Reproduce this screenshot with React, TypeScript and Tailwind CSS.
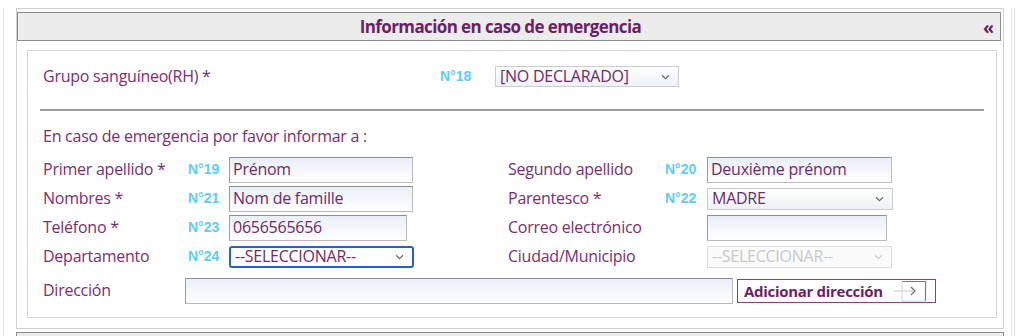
import React from "react";

const labelCls =
  "pb-[2px] text-[16px] tracking-[-0.25px] leading-[20px] text-[#7a2e70]";
const numCls =
  "font-['Liberation_Sans',Arial,sans-serif] font-bold text-[14px] text-[#5ccdf3]";

const Chevron: React.FC<{ color?: string }> = ({ color = "#6b6b6b" }) => (
  <svg width="9" height="6" viewBox="0 0 9 6" className="shrink-0">
    <path d="M1 1.2 L4.5 4.6 L8 1.2" fill="none" stroke={color} strokeWidth="1.2" />
  </svg>
);

const TextInput: React.FC<{ value?: string; className: string }> = ({
  value = "",
  className,
}) => (
  <div
    className={
      "h-[26px] border border-[#b9b9b9] border-t-[#8f8f8f] border-l-[#9a9a9a] bg-linear-to-b from-[#e9eff8] to-white pl-[3px] text-[16px] tracking-[-0.25px] leading-[23px] text-[#6e2a66] " +
      className
    }
  >
    {value}
  </div>
);

const SelectBox: React.FC<{
  value: string;
  className: string;
  disabled?: boolean;
}> = ({ value, className, disabled }) => (
  <div
    className={
      "flex items-center justify-between pl-[4px] pr-[8px] text-[16px] tracking-[-0.25px] leading-[19px] " +
      (disabled
        ? "border border-[#dcdcdc] bg-[#fafafa] text-[#c9c9c9] "
        : "text-[#6e2a66] ") +
      className
    }
  >
    <span>{value}</span>
    <Chevron color={disabled ? "#cfcfcf" : "#6b6b6b"} />
  </div>
);

const Row: React.FC<{ children: React.ReactNode }> = ({ children }) => (
  <div className="flex h-[29px] items-center">{children}</div>
);

export default function App() {
  return (
    <div className="h-[336px] w-[1024px] overflow-hidden bg-white font-['Open_Sans',sans-serif]">
      <div className="ml-[3px] h-full w-[1012px] border-x border-[#e2e2e2]">
        <div className="h-full w-[1008px] border-r border-[#e6e6e6]">
          <div className="ml-[12px] mr-[7px] mt-[8px] border border-[#cfcfcf] pb-[10px]">
            {/* header */}
            <div className="mr-[2px] mt-[3px] flex h-[29px] items-center border border-[#8c8c8c] bg-[#ececec]">
              <div className="flex-1 text-center text-[17px] font-bold tracking-[-0.6px] leading-[20px] text-[#6c1f62]">
                Información en caso de emergencia
              </div>
              <div className="pr-[6px] text-[18px] font-bold leading-[20px] text-[#6c1f62]">
                «
              </div>
            </div>

            {/* body */}
            <div className="ml-[10px] mr-[6px] mt-[9px] border border-[#d4d4d4] px-[14px] pb-[14px] pt-[15px]">
              <div className="flex h-[21px] items-center">
                <div className={labelCls + " w-[398px] pl-[1px]"}>Grupo sanguíneo(RH) *</div>
                <div className={numCls + " w-[55px]"}>N°18</div>
                <SelectBox
                  value="[NO DECLARADO]"
                  className="h-[21px] w-[184px] border border-[#cdcdcd] bg-linear-to-b from-white to-[#edf1f7]"
                />
              </div>

              <div className="-mx-[2px] mt-[22px] h-[2px] bg-[#9c9c9c]" />

              <div className={labelCls + " mt-[15px] pl-[1px]"}>
                En caso de emergencia por favor informar a :
              </div>

              <div className="mt-[7px]">
                <Row>
                  <div className={labelCls + " w-[146px] pl-[1px]"}>Primer apellido *</div>
                  <div className={numCls + " w-[41px]"}>N°19</div>
                  <TextInput value="Prénom" className="w-[184px]" />
                  <div className={labelCls + " ml-[95px] w-[157px]"}>Segundo apellido</div>
                  <div className={numCls + " w-[42px]"}>N°20</div>
                  <TextInput value="Deuxième prénom" className="w-[185px]" />
                </Row>
                <Row>
                  <div className={labelCls + " w-[146px] pl-[1px]"}>Nombres *</div>
                  <div className={numCls + " w-[41px]"}>N°21</div>
                  <TextInput value="Nom de famille" className="w-[184px]" />
                  <div className={labelCls + " ml-[95px] w-[157px]"}>Parentesco *</div>
                  <div className={numCls + " w-[42px]"}>N°22</div>
                  <SelectBox
                    value="MADRE"
                    className="h-[22px] w-[186px] border border-[#cdcdcd] bg-linear-to-b from-white to-[#edf1f7]"
                  />
                </Row>
                <Row>
                  <div className={labelCls + " w-[146px] pl-[1px]"}>Teléfono *</div>
                  <div className={numCls + " w-[41px]"}>N°23</div>
                  <TextInput value="0656565656" className="w-[178px]" />
                  <div className={labelCls + " ml-[101px] w-[199px]"}>Correo electrónico</div>
                  <TextInput className="w-[180px]" />
                </Row>
                <Row>
                  <div className={labelCls + " w-[146px] pl-[1px]"}>Departamento</div>
                  <div className={numCls + " w-[41px]"}>N°24</div>
                  <SelectBox
                    value="--SELECCIONAR--"
                    className="h-[22px] w-[185px] rounded-[3px] border-2 border-[#2164c4] bg-white pl-[2px]"
                  />
                  <div className={labelCls + " ml-[94px] w-[199px]"}>Ciudad/Municipio</div>
                  <SelectBox
                    value="--SELECCIONAR--"
                    className="h-[22px] w-[185px]"
                    disabled
                  />
                </Row>
              </div>

              <div className="mt-[8px] flex h-[24px] items-center">
                <div className={labelCls + " w-[143px] pl-[1px]"}>Dirección</div>
                <TextInput className="h-[24px] w-[548px]" />
                <button className="ml-[4px] flex h-[24px] w-[199px] items-center border border-[#8a3f80] bg-white pl-[6px] text-[15px] font-bold tracking-[-0.3px] leading-[20px] text-[#6c1f62]">
                  <span>Adicionar dirección</span>
                  <svg width="34" height="22" viewBox="0 0 34 22" className="ml-auto mr-[8px]">
                    <line x1="1" y1="11" x2="20" y2="11" stroke="#c8c8c8" strokeWidth="1" />
                    <path d="M9 1.5 H32.5 V21" fill="none" stroke="#7c7c7c" strokeWidth="1.2" />
                    <path d="M9 1.5 V21 H32.5" fill="none" stroke="#d2d2d2" strokeWidth="1" />
                    <path d="M18 7 L22 11 L18 15" fill="none" stroke="#6b6b6b" strokeWidth="1.2" />
                  </svg>
                </button>
              </div>
            </div>
          </div>
          <div className="ml-[12px] mr-[7px] mt-[3px] h-[20px] border border-[#8c8c8c] bg-[#ececec]" />
        </div>
      </div>
    </div>
  );
}
